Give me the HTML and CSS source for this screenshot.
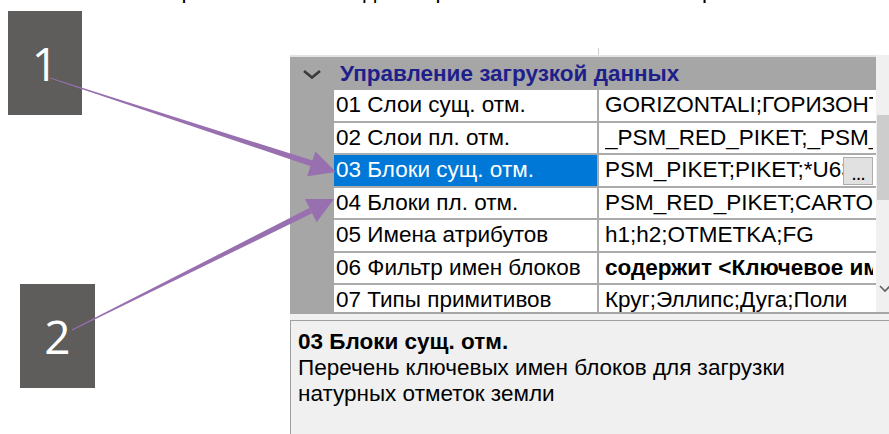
FILE: index.html
```
<!DOCTYPE html>
<html lang="ru">
<head>
<meta charset="utf-8">
<title>Управление загрузкой данных</title>
<link rel="stylesheet" href="styles.css">
</head>
<body>
<div class="page">
  <div class="caption"><span class="caption-text">Все настройки этой команды собраны в нескольких категориях окна свойств</span></div>

  <div class="stage">
    <div class="notes">
      <div class="badge badge-1">1</div>
      <div class="badge badge-2">2</div>
    </div>

    <div class="panel">
      <div class="panel-top"><span class="tick"></span></div>

      <div class="grid">
        <div class="grid-body">
          <div class="cat">
            <svg class="chevron" width="20" height="10" viewBox="0 0 20 10"><path d="M2 2 L10 8.5 L18 2" fill="none" stroke="#3a3a3a" stroke-width="2.6"/></svg>
            <span class="cat-title">Управление загрузкой данных</span>
          </div>

          <div class="row">
            <div class="gutter"></div>
            <div class="name">01 Слои сущ. отм.</div>
            <div class="value"><span class="val-text">GORIZONTALI;ГОРИЗОНТАЛИ;GORIZ</span></div>
          </div>
          <div class="row">
            <div class="gutter"></div>
            <div class="name">02 Слои пл. отм.</div>
            <div class="value"><span class="val-text">_PSM_RED_PIKET;_PSM_CARTOGRAM</span></div>
          </div>
          <div class="row">
            <div class="gutter"></div>
            <div class="name selected">03 Блоки сущ. отм.</div>
            <div class="value"><span class="val-text">PSM_PIKET;PIKET;*U63;*U64</span><span class="dots">...</span></div>
          </div>
          <div class="row">
            <div class="gutter"></div>
            <div class="name">04 Блоки пл. отм.</div>
            <div class="value"><span class="val-text">PSM_RED_PIKET;CARTOGRAM</span></div>
          </div>
          <div class="row">
            <div class="gutter"></div>
            <div class="name">05 Имена атрибутов</div>
            <div class="value"><span class="val-text">h1;h2;OTMETKA;FG</span></div>
          </div>
          <div class="row">
            <div class="gutter"></div>
            <div class="name">06 Фильтр имен блоков</div>
            <div class="value"><span class="val-text bold">содержит &lt;Ключевое имя&gt;</span></div>
          </div>
          <div class="row">
            <div class="gutter"></div>
            <div class="name">07 Типы примитивов</div>
            <div class="value"><span class="val-text">Круг;Эллипс;Дуга;Поли</span></div>
          </div>
        </div>

        <div class="vscroll">
          <div class="thumb"></div>
          <svg class="scroll-down" width="13" height="8" viewBox="0 0 13 8"><path d="M4 1 L9 6 L14 1" fill="none" stroke="#606060" stroke-width="1.6"/></svg>
        </div>
      </div>

      <div class="gap"></div>

      <div class="desc">
        <div class="desc-title">03 Блоки сущ. отм.</div>
        <div class="desc-text">Перечень ключевых имен блоков для загрузки<br>натурных отметок земли</div>
      </div>
    </div>
  </div>

  <!-- callout pointers from the numbered badges to rows 03 and 04 -->
  <svg class="pointers" width="889" height="434" viewBox="0 0 889 434">
    <g fill="#9870b0">
      <polygon points="49.8,77.5 50.2,78.5 313.8,167.2 312.6,160.6"/>
      <polygon points="336,172 315.4,151.5 307.2,176.2"/>
      <polygon points="71.8,329.6 72.2,330.4 312.1,213.3 309.4,207.9"/>
      <polygon points="334,199 305,199 316.6,222.2"/>
    </g>
  </svg>
</div>
</body>
</html>
```

FILE: styles.css
```
html, body {
  margin: 0;
  padding: 0;
  overflow: hidden;
  background: #ffffff;
}

body {
  font-family: "Liberation Sans", Arial, sans-serif;
  font-size: 22.5px;
  color: #000000;
}

.page {
  position: relative;
  width: 889px;
  height: 434px;
  overflow: hidden;
}

/* last line of the text above, cut by the top edge */
.caption {
  height: 5px;
  overflow: hidden;
  padding-left: 90px;
}

.caption-text {
  display: block;
  line-height: 26px;
  margin-top: -22px;
  white-space: nowrap;
}

.stage {
  display: flex;
  height: 429px;
}

/* numbered callouts */
.notes {
  position: relative;
  width: 290px;
  flex: none;
}

.badge {
  position: absolute;
  width: 74px;
  height: 104px;
  background: #5e5d5b;
  color: #ffffff;
  font-family: "Open Sans", "Liberation Sans", sans-serif;
  font-size: 46px;
  display: flex;
  align-items: center;
  justify-content: center;
}

.badge-1 {
  left: 8px;
  top: 6px;
}

.badge-2 {
  left: 20px;
  top: 279px;
  width: 75px;
}

.pointers {
  position: absolute;
  left: 0;
  top: 0;
  pointer-events: none;
}

/* property grid */
.panel {
  width: 599px;
  flex: none;
  display: flex;
  flex-direction: column;
  overflow: hidden;
}

.panel-top {
  height: 50px;
  display: flex;
  align-items: flex-end;
  padding-left: 308px;
}

.tick {
  width: 1px;
  height: 7px;
  background: #cfcfcf;
}

.grid {
  display: flex;
  height: 257px;
  flex: none;
  overflow: hidden;
}

.grid-body {
  width: 586px;
  flex: none;
  border-top: 2px solid #e2e2e2;
  overflow: hidden;
}

.cat {
  height: 33px;
  background: #a6a6a6;
  display: flex;
  align-items: center;
  padding-left: 12px;
  gap: 18px;
}

.chevron {
  flex: none;
}

.cat-title {
  font-weight: bold;
  color: #1f1f8c;
  white-space: nowrap;
}

.row {
  display: flex;
  height: 32.5px;
}

.gutter {
  width: 44px;
  flex: none;
  background: #a6a6a6;
}

.name,
.value {
  box-sizing: border-box;
  height: 32.5px;
  border-bottom: 2px solid #ababab;
  background: #ffffff;
  display: flex;
  align-items: center;
  white-space: nowrap;
  overflow: hidden;
}

.name {
  width: 265px;
  flex: none;
  padding-left: 2px;
  border-right: 2px solid #ababab;
}

.name.selected {
  background: #0078d7;
  color: #ffffff;
}

.value {
  flex: 1;
  padding-left: 6px;
  padding-right: 3px;
}

.val-text {
  flex: 1;
  overflow: hidden;
  white-space: nowrap;
}

.val-text.bold {
  font-weight: bold;
}

.dots {
  flex: none;
  box-sizing: border-box;
  width: 30px;
  height: 28px;
  margin-top: 1px;
  background: #e1e1e1;
  border: 1px solid #adadad;
  display: flex;
  justify-content: center;
  align-items: flex-end;
  line-height: 22px;
  font-size: 20px;
  letter-spacing: -1px;
}

/* vertical scrollbar, cut by the right edge */
.vscroll {
  width: 13px;
  flex: none;
  background: #f0f0f0;
  display: flex;
  flex-direction: column;
}

.thumb {
  margin-top: 60px;
  margin-left: 1px;
  height: 85px;
  background: #cdcdcd;
}

.scroll-down {
  margin-top: auto;
  margin-bottom: 19px;
}

.gap {
  height: 6px;
  flex: none;
  background: #f0f0f0;
  border-top: 2px solid #a6a6a6;
}

/* help text pane */
.desc {
  flex: 1;
  background: #f0f0f0;
  border-top: 1px solid #a0a0a0;
  border-left: 1px solid #a0a0a0;
  padding: 8px 0 0 7px;
  line-height: 26px;
  white-space: nowrap;
}

.desc-title {
  font-weight: bold;
}
```
